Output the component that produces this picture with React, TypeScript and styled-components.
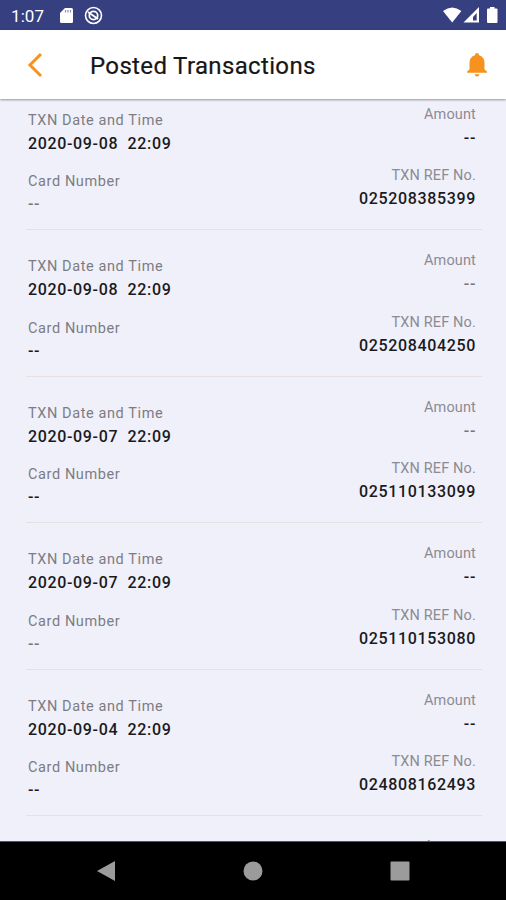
import React from "react";
import styled, { createGlobalStyle } from "styled-components";

const GlobalStyle = createGlobalStyle`
  * { box-sizing: border-box; }
  body { margin: 0; background: #f0f0fa; }
`;

const Screen = styled.div`
  width: 506px;
  height: 900px;
  display: flex;
  flex-direction: column;
  overflow: hidden;
  background: #f0f0fa;
  font-family: Roboto, "Liberation Sans", sans-serif;
`;

const StatusBar = styled.div`
  flex: none;
  height: 30px;
  display: flex;
  align-items: center;
  padding: 2px 7px 0 11px;
  background: #363f7f;
  color: #fff;
`;

const Clock = styled.span`
  width: 48px;
  font-size: 17px;
  line-height: 20px;
  letter-spacing: 0.1px;
`;

const StatusIcons = styled.div<{ $end?: boolean }>`
  display: flex;
  align-items: center;
  margin-left: ${(p) => (p.$end ? "auto" : "0")};
  svg { display: block; }
`;

const AppBar = styled.header`
  flex: none;
  height: 69px;
  display: flex;
  align-items: center;
  padding: 0 18px 0 27px;
  background: #fff;
  box-shadow: 0 1px 2px rgba(0, 0, 0, 0.38);
  z-index: 1;
`;

const IconButton = styled.button`
  flex: none;
  padding: 0;
  border: 0;
  background: none;
  svg { display: block; }
`;

const Title = styled.h1`
  flex: 1;
  margin: 2px 0 0 46px;
  font-size: 24px;
  font-weight: 400;
  line-height: 30px;
  letter-spacing: 0.35px;
  color: #161616;
  -webkit-text-stroke: 0.2px #161616;
`;

const List = styled.main`
  flex: 1;
  min-height: 0;
  overflow: hidden;
  padding: 0 24px 0 26px;
`;

const Row = styled.section`
  height: 146.4px;
  display: flex;
  justify-content: space-between;
  padding: 28px 6px 0 2px;
  border-bottom: 1px solid #e6e0e1;
  &:first-child { margin-top: -15px; }
`;

const Column = styled.div<{ $right?: boolean }>`
  display: flex;
  flex-direction: column;
  text-align: ${(p) => (p.$right ? "right" : "left")};
  margin-top: ${(p) => (p.$right ? "-6px" : "0")};
`;

const Field = styled.div`
  flex: none;
  height: 61.4px;
`;

const Label = styled.div<{ $right?: boolean }>`
  font-size: 14.5px;
  line-height: 18px;
  letter-spacing: ${(p) => (p.$right ? "0.15px" : "0.6px")};
  color: ${(p) => (p.$right ? "#8b8b93" : "#7c7c84")};
`;

const Value = styled.div<{ $muted?: boolean; $tight?: boolean }>`
  margin-top: ${(p) => (p.$tight ? "3px" : "4px")};
  font-size: 16px;
  font-weight: 500;
  line-height: 20px;
  letter-spacing: 0.66px;
  white-space: pre;
  color: ${(p) => (p.$muted ? "#77777f" : "#1a1a1e")};
`;

const NavBar = styled.nav`
  flex: none;
  height: 59px;
  display: flex;
  align-items: center;
  justify-content: space-between;
  padding: 0 96px;
  background: #000;
  border-top: 1px solid #55555a;
`;

interface Txn {
  date: string;
  reference: string;
  mutedCard?: boolean;
  mutedAmount?: boolean;
}

const transactions: Txn[] = [
  { date: "2020-09-08  22:09", reference: "025208385399", mutedCard: true },
  { date: "2020-09-08  22:09", reference: "025208404250", mutedAmount: true },
  { date: "2020-09-07  22:09", reference: "025110133099", mutedAmount: true },
  { date: "2020-09-07  22:09", reference: "025110153080", mutedCard: true },
  { date: "2020-09-04  22:09", reference: "024808162493" },
  { date: "2020-09-04  22:09", reference: "024808162493" },
];

const Transaction = ({ date, reference, mutedCard, mutedAmount }: Txn) => (
  <Row>
    <Column>
      <Field>
        <Label>TXN Date and Time</Label>
        <Value>{date}</Value>
      </Field>
      <Field>
        <Label>Card Number</Label>
        <Value $tight $muted={mutedCard}>--</Value>
      </Field>
    </Column>
    <Column $right>
      <Field>
        <Label $right>Amount</Label>
        <Value $muted={mutedAmount}>--</Value>
      </Field>
      <Field>
        <Label $right>TXN REF No.</Label>
        <Value>{reference}</Value>
      </Field>
    </Column>
  </Row>
);

export default function App() {
  return (
    <Screen>
      <GlobalStyle />
      <StatusBar>
        <Clock>1:07</Clock>
        <StatusIcons>
          <svg width="46" height="20" viewBox="0 0 46 20">
            <path d="M6 2h6.500q1.500 0 1.500 1.500v12q0 1.500-1.500 1.500h-10q-1.500 0-1.500-1.500V7z" fill="#fff" />
            <path d="M6.500 4v2.500M9 4v2.500M11.500 4v2.500" stroke="#8a90b8" strokeWidth="1.200" />
            <circle cx="34.500" cy="9.500" r="8" fill="none" stroke="#fff" strokeWidth="1.600" />
            <circle cx="34.500" cy="9.500" r="4.200" fill="none" stroke="#fff" strokeWidth="1.800" />
            <path d="M29 6l10 7" stroke="#fff" strokeWidth="1.800" />
          </svg>
        </StatusIcons>
        <StatusIcons $end>
          <svg width="57" height="20" viewBox="0 0 57 20">
            <path d="M1 5q9.200-7 18.400 0L10.200 16.500z" fill="#fff" />
            <path d="M37 1v15.500H21.500z" fill="#fff" />
            <path d="M34.700 7v7.500H31V11z" fill="#363f7f" />
            <path d="M48 1h4.500v1.600h2q1 0 1 1v12.400q0 1-1 1h-8.500q-1 0-1-1v-12.400q0-1 1-1H48z" fill="#fff" />
          </svg>
        </StatusIcons>
      </StatusBar>
      <AppBar>
        <IconButton aria-label="Back">
          <svg width="17" height="26" viewBox="0 0 17 26">
            <path d="M14 2L3 13l11 11" fill="none" stroke="#f7921e" strokeWidth="3" />
          </svg>
        </IconButton>
        <Title>Posted Transactions</Title>
        <IconButton aria-label="Notifications">
          <svg width="22" height="26" viewBox="0 0 22 26">
            <path
              d="M11 1q2 0 2 2.300q5.500 1.500 5.500 7.500v6.500l2.500 2.400v1H1v-1l2.500-2.400v-6.500q0-6 5.500-7.500Q9 1 11 1zM8.500 22.200h5Q13 24.600 11 24.600T8.500 22.200z"
              fill="#f7921e"
            />
          </svg>
        </IconButton>
      </AppBar>
      <List>
        {transactions.map((t, i) => (
          <Transaction key={i} {...t} />
        ))}
      </List>
      <NavBar>
        <svg width="20" height="22" viewBox="0 0 20 22">
          <path d="M1 11L19 1v20z" fill="#9b9b9b" />
        </svg>
        <svg width="20" height="20" viewBox="0 0 20 20">
          <circle cx="10" cy="10" r="9.500" fill="#9b9b9b" />
        </svg>
        <svg width="20" height="20" viewBox="0 0 20 20">
          <rect x=".5" y=".5" width="19" height="19" rx="1" fill="#9b9b9b" />
        </svg>
      </NavBar>
    </Screen>
  );
}
